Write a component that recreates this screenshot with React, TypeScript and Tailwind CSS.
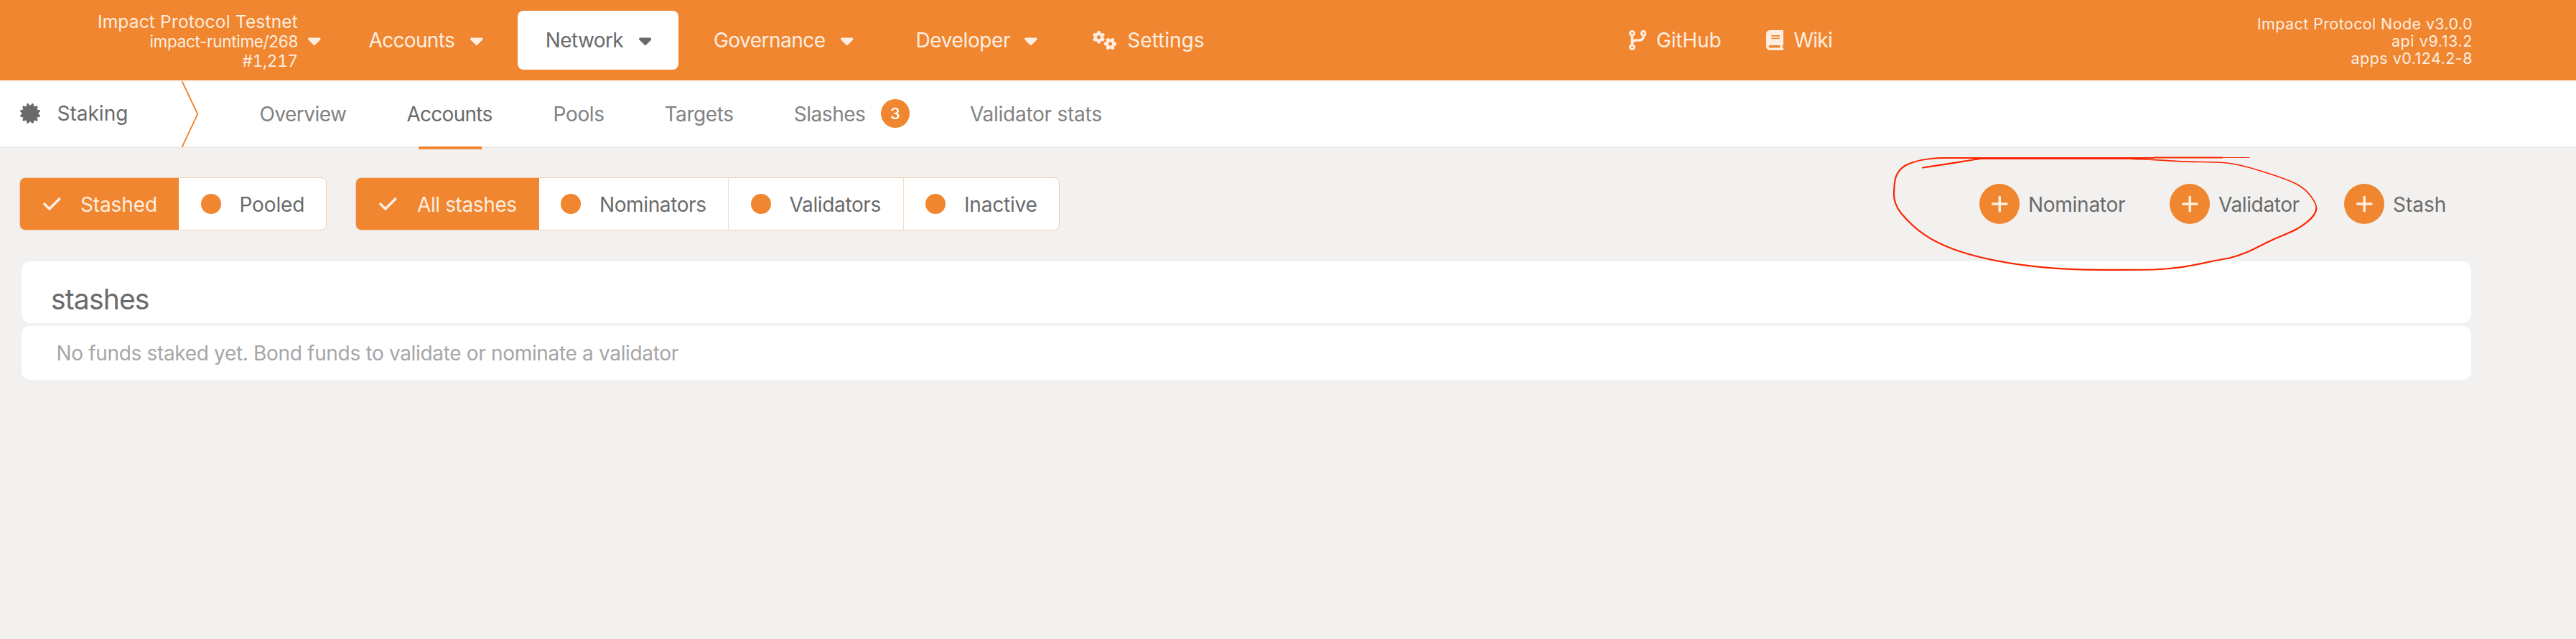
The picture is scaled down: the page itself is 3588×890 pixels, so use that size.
import type { ReactNode } from 'react';
import { FaBook, FaCaretDown, FaCertificate, FaCheck, FaCodeBranch, FaGears, FaPlus } from 'react-icons/fa6';

function Caret() {
  return <FaCaretDown className="h-7 w-[17.5px] shrink-0" />;
}

function MenuItem({ className, label }: { className: string; label: ReactNode }) {
  return (
    <div className={`flex h-[82px] shrink-0 items-center justify-between ${className}`}>
      <span>{label}</span>
      <Caret />
    </div>
  );
}

function Header() {
  return (
    <header className="flex h-28 items-center bg-[#f0862f] text-[28px] leading-8 text-[#feeee1]">
      <div className="flex w-[415px] shrink-0 flex-col items-end pt-[2px] leading-[27px]">
        <span className="text-[24.5px] tracking-[0.18px]">Impact Protocol Testnet</span>
        <span className="text-[22.5px] tracking-[-0.32px]">impact-runtime/268</span>
        <span className="text-[22.5px] tracking-[-0.2px] tabular-nums">#1,217</span>
      </div>
      <div className="ml-[14px] flex">
        <Caret />
      </div>
      <MenuItem className="ml-[67px] w-[159px] tracking-[-0.66px]" label="Accounts" />
      <MenuItem
        className="ml-[48.5px] w-56 rounded-lg bg-white pr-[38px] pl-[38.7px] tracking-[-0.58px] text-[#6a6a6a]"
        label="Network"
      />
      <MenuItem className="ml-[49px] w-[194px] tracking-[-0.53px]" label="Governance" />
      <MenuItem className="ml-[87.5px] w-[169px] tracking-[-0.37px]" label="Developer" />
      <div className="ml-[77px] flex w-[156px] shrink-0 items-center gap-[15px]">
        <FaGears className="h-7 w-[35px]" />
        <span>Settings</span>
      </div>
      <div className="ml-[591px] flex w-[131px] shrink-0 items-center gap-[14px] tracking-[-0.16px]">
        <FaCodeBranch className="h-7 w-[24.5px]" />
        <span>GitHub</span>
      </div>
      <div className="ml-[60px] flex shrink-0 items-center gap-[14.5px] tracking-[-0.78px]">
        <FaBook className="h-7 w-[24.5px]" />
        <span>Wiki</span>
      </div>
      <div className="mr-[144px] ml-auto flex flex-col items-end pt-[2px] text-[21.5px] leading-6">
        <span className="tracking-[0.39px]">Impact Protocol Node v3.0.0</span>
        <span className="tracking-[0.59px]">api v9.13.2</span>
        <span className="tracking-[0.47px]">apps v0.124.2-8</span>
      </div>
    </header>
  );
}

function SubNav() {
  return (
    <nav className="flex h-[94px] border-b-2 border-[#ecebe9] bg-white text-[28px] leading-[92px] text-[#828282]">
      <div className="flex w-[253px] shrink-0 items-center pl-7 text-[#6a6a6a]">
        <FaCertificate className="size-7" />
        <span className="ml-[23.5px]">Staking</span>
      </div>
      <svg className="h-[94px] w-6 shrink-0" viewBox="0 0 24 94" fill="none">
        <path d="M0.5 1L22.2 46.8L0.5 93" stroke="#f0862f" strokeWidth="1.9" />
      </svg>
      <div className="ml-[84.5px] w-[122px] shrink-0 pt-px tracking-[-0.53px]">Overview</div>
      <div className="relative ml-[83px] w-[120.5px] shrink-0 pt-px tracking-[-0.73px] text-[#6a6a6a]">
        Accounts
        <div className="absolute top-[92px] left-4 h-1 w-[88px] bg-[#f0862f]" />
      </div>
      <div className="ml-[83.6px] w-[73.4px] shrink-0 pt-px tracking-[-0.35px]">Pools</div>
      <div className="ml-[81.5px] w-[97.5px] shrink-0 pt-px tracking-[-0.42px]">Targets</div>
      <div className="ml-[82.8px] flex w-[161.2px] shrink-0 items-center justify-between tracking-[-0.47px]">
        <span className="pt-px">Slashes</span>
        <span className="flex size-10 items-center justify-center rounded-full bg-[#f0862f] text-[22px] leading-none font-medium tracking-normal text-white">
          3
        </span>
      </div>
      <div className="ml-[84px] shrink-0 pt-px tracking-[-0.26px]">Validator stats</div>
    </nav>
  );
}

function ActiveOption({ className, gap, label }: { className: string; gap: string; label: string }) {
  return (
    <div className={`flex h-full shrink-0 items-center bg-[#f0862f] pl-8 text-[#feeee1] ${className}`}>
      <FaCheck className="h-7 w-[24.5px]" />
      <span className={gap}>{label}</span>
    </div>
  );
}

function Option({ className, gap, label }: { className: string; gap: string; label: string }) {
  return (
    <div className={`flex h-full shrink-0 items-center ${className}`}>
      <span className="size-7 shrink-0 rounded-full bg-[#f0862f]" />
      <span className={gap}>{label}</span>
    </div>
  );
}

function AddButton({ className, label }: { className: string; label: string }) {
  return (
    <div className={`flex h-14 shrink-0 items-center ${className}`}>
      <span className="flex size-14 shrink-0 items-center justify-center rounded-full bg-[#f0862f] text-[#feeee1]">
        <FaPlus className="h-7 w-[24.5px]" />
      </span>
      <span className="pt-0.5">{label}</span>
    </div>
  );
}

function Toolbar() {
  return (
    <div className="mt-[41px] flex h-[74px] items-center text-[28px] leading-8 text-[#6a6a6a]">
      <div className="ml-[27px] flex h-[74px] w-[428px] shrink-0 overflow-hidden rounded-lg border border-[#f3cfae] bg-white">
        <ActiveOption className="w-[221px] tracking-[-0.12px]" gap="ml-[27.5px] pt-0.5" label="Stashed" />
        <Option className="pl-[31px] tracking-[-0.14px]" gap="ml-[25.5px] pt-0.5" label="Pooled" />
      </div>
      <div className="ml-10 flex h-[74px] w-[981px] shrink-0 overflow-hidden rounded-lg border border-[#f3cfae] bg-white">
        <ActiveOption className="w-[255px] tracking-[-0.39px]" gap="ml-[28.5px] pt-0.5" label="All stashes" />
        <Option className="w-[264px] border-r border-[#f8dcc4] pl-[29.7px] tracking-[-0.38px]" gap="ml-[26.3px] pt-0.5" label="Nominators" />
        <Option className="w-[244px] border-r border-[#f8dcc4] pl-[30.5px] tracking-[-0.36px]" gap="ml-[26px] pt-0.5" label="Validators" />
        <Option className="pl-[29.5px] tracking-[-0.2px]" gap="ml-[26.5px] pt-0.5" label="Inactive" />
      </div>
      <AddButton className="ml-[1281px] w-[265px] gap-[12px] tracking-[-0.27px]" label="Nominator" />
      <AddButton className="w-[243px] gap-[12px] tracking-[-0.39px]" label="Validator" />
      <AddButton className="gap-[12px]" label="Stash" />
    </div>
  );
}

function HandDrawnCircle() {
  return (
    <svg
      className="pointer-events-none absolute top-[210px] left-[2630px] h-[175px] w-[610px]"
      viewBox="2630 210 610 175"
      fill="none"
      stroke="#fb2500"
      strokeLinecap="round"
      strokeLinejoin="round"
    >
      <path d="M3000 219.5H3095" strokeWidth="1.8" />
      <path d="M3090 219.5H3133" strokeWidth="1.1" />
      <path
        d="M3000 220H2706C2682 220.500 2664 225 2653 231C2639 240 2638.300 253 2638 270C2637.700 280 2641 288 2648 297C2668 321 2690 336 2722 347.500C2765 363 2820 371 2873 374.300C2905 376 2960 376 3000 375.500C3045 374 3070 365 3105 359.500C3130 353 3140 346 3160 336.500C3176 329 3188 325 3199 319C3213 311 3226 300 3226.300 290"
        strokeWidth="2.200"
      />
      <path
        d="M3226.300 290C3226.500 281 3214 266 3206 261C3198 254 3173 245.500 3150 238.500C3130 232 3110 227.500 3097 226.500C3080 225.500 3050 225.500 3030 224.300C3005 223 2990 221.600 2970 221.500"
        strokeWidth="1.7"
      />
      <path d="M2975 221H2760C2753 221.500 2720 227.500 2678 233.500" strokeWidth="2.200" />
    </svg>
  );
}

export default function App() {
  return (
    <div className="relative h-[890px] w-[3588px] overflow-hidden bg-[#f2f1ef] font-['Inter',sans-serif] whitespace-nowrap">
      <Header />
      <SubNav />
      <Toolbar />
      <main className="mt-[43px] ml-[30px] flex w-[3412px] flex-col gap-1">
        <div className="h-[86px] rounded-xl bg-white pt-[29px] pl-[41px] text-[39px] leading-[48px] tracking-[-0.84px] text-[#6a6a6a]">
          stashes
        </div>
        <div className="h-[75px] rounded-xl bg-white pl-[48.5px] text-[28px] leading-[76px] tracking-[-0.33px] text-[#a6a6a6]">
          No funds staked yet. Bond funds to validate or nominate a validator
        </div>
      </main>
      <HandDrawnCircle />
    </div>
  );
}
